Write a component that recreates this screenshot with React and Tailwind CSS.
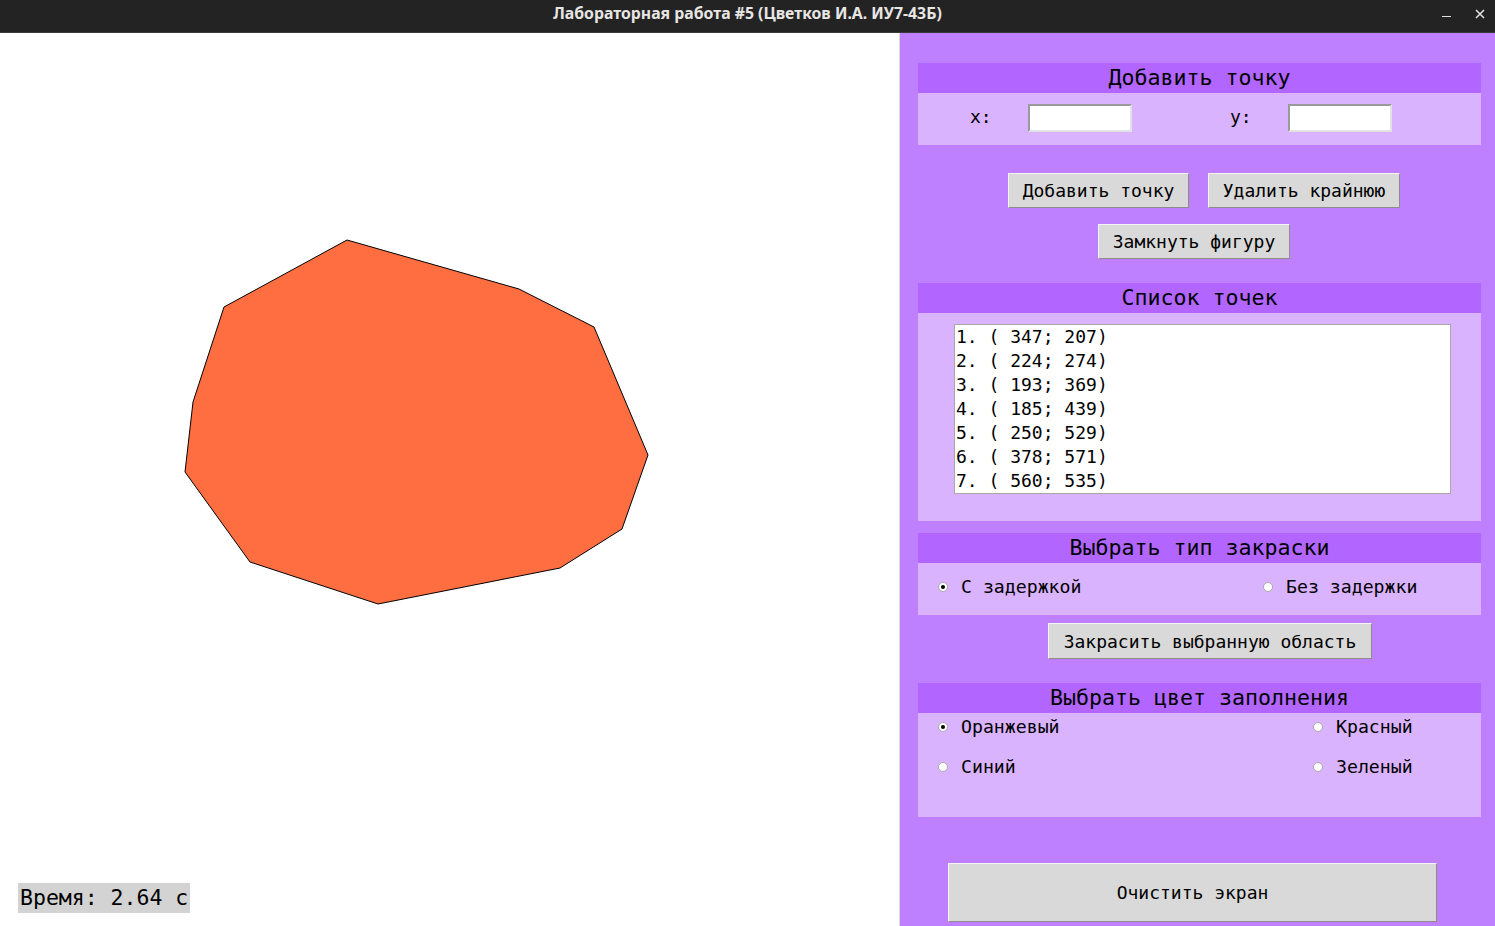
import React from "react";

const listed = [
    [347, 207],
    [224, 274],
    [193, 369],
    [185, 439],
    [250, 529],
    [378, 571],
    [560, 535],
];

// the rest of the figure is scrolled out of the listbox
const figure = [...listed, [622, 496], [648, 422], [594, 294], [519, 256]];

const mono = "font-['DejaVu_Sans_Mono',monospace]";

function TkButton({ children, className = "" }) {
    return (
        <div
            className={`flex items-center justify-center bg-[#d9d9d9] border border-t-[#f4f4f4] border-l-[#f4f4f4] border-r-[#8c8c8c] border-b-[#8c8c8c] text-[18px] text-black ${mono} ${className}`}
        >
            {children}
        </div>
    );
}

function Section({ title, children }) {
    return (
        <div>
            <div className={`h-[30px] bg-[#b366ff] flex items-center justify-center text-[21.6px] leading-none text-black ${mono}`}>
                {title}
            </div>
            <div className="bg-[#dab3ff]">{children}</div>
        </div>
    );
}

function Radio({ label, checked }) {
    return (
        <div className={`flex items-center h-[24px] text-[18.2px] text-black ${mono}`}>
            <span className="w-[10px] h-[10px] rounded-full bg-white border border-[#a9a9a9] flex items-center justify-center">
                {checked ? <span className="w-[4px] h-[4px] rounded-full bg-black" /> : null}
            </span>
            <span className="ml-[13px]">{label}</span>
        </div>
    );
}

function Entry() {
    return (
        <div className="w-[104px] h-[28px] bg-white border-2 border-t-[#9a9a9a] border-l-[#9a9a9a] border-r-[#e2e2e2] border-b-[#e2e2e2]" />
    );
}

export default function App() {
    return (
        <div className="w-[1495px] h-[926px] flex flex-col overflow-hidden">
            {/* Window title bar */}
            <div className="h-[33px] bg-[#232323] border-b border-[#3a3a3a] flex items-center relative pb-[4px]">
                <div className="flex-1 text-center text-[15.8px] font-bold text-[#e8e6e3] font-['Noto_Sans',sans-serif]">
                    Лабораторная работа #5 (Цветков И.А. ИУ7-43Б)
                </div>
                <div className="absolute right-[10px] top-0 h-[30px] flex items-center gap-[24px] text-[#e0e0e0]">
                    <span className="block w-[9px] h-[1.5px] bg-[#e0e0e0] mt-[3px]" />
                    <svg width="10" height="10" viewBox="0 0 10 10" className="mt-[-2px]">
                        <path d="M1 1L9 9M9 1L1 9" stroke="#e0e0e0" strokeWidth="1.6" />
                    </svg>
                </div>
            </div>

            <div className="flex flex-1">
                {/* Canvas */}
                <div className="w-[900px] bg-white border-r border-[#d9d9d9] flex flex-col">
                    <svg width="899" height="850" className="block">
                        <polygon
                            points={figure.map((p) => p.join(",")).join(" ")}
                            fill="#ff6e40"
                            stroke="#000"
                            strokeWidth="1"
                        />
                    </svg>
                    <div className={`ml-[18px] w-[172px] h-[30px] bg-[#d3d3d3] flex items-center pl-[2px] text-[21.5px] text-black whitespace-pre ${mono}`}>
                        Время: 2.64 с
                    </div>
                </div>

                {/* Control panel */}
                <div className="flex-1 bg-[#bf80ff] pl-[18px] pr-[14px] pt-[30px] flex flex-col">
                    <Section title="Добавить точку">
                        <div className={`h-[52px] pt-[11px] flex items-start text-[18px] leading-[28px] text-black ${mono}`}>
                            <div className="w-[110px] pl-[52px] leading-[26px]">x:</div>
                            <Entry />
                            <div className="w-[156px] pl-[98px] leading-[26px]">y:</div>
                            <Entry />
                        </div>
                    </Section>

                    <div className="mt-[28px] flex gap-[19px] pl-[90px]">
                        <TkButton className="w-[181px] h-[35px]">Добавить точку</TkButton>
                        <TkButton className="w-[192px] h-[35px]">Удалить крайнюю</TkButton>
                    </div>
                    <div className="mt-[16px] flex pl-[180px]">
                        <TkButton className="w-[192px] h-[35px]">Замкнуть фигуру</TkButton>
                    </div>

                    <div className="mt-[24px]">
                        <Section title="Список точек">
                            <div className="pt-[11px] pb-[27px] pl-[36px]">
                                <div className={`w-[497px] h-[170px] bg-white border border-[#a8a8a8] pl-[1px] text-[18px] leading-[24px] text-black whitespace-pre ${mono}`}>
                                    {listed.map(([x, y], i) => (
                                        <div key={i}>{`${i + 1}. ( ${x}; ${y})`}</div>
                                    ))}
                                </div>
                            </div>
                        </Section>
                    </div>

                    <div className="mt-[12px]">
                        <Section title="Выбрать тип закраски">
                            <div className="h-[52px] pb-[4px] flex items-center">
                                <div className="w-[345px] pl-[20px]">
                                    <Radio label="С задержкой" checked />
                                </div>
                                <Radio label="Без задержки" />
                            </div>
                        </Section>
                    </div>

                    <div className="mt-[8px] flex pl-[130px]">
                        <TkButton className="w-[324px] h-[36px]">Закрасить выбранную область</TkButton>
                    </div>

                    <div className="mt-[24px]">
                        <Section title="Выбрать цвет заполнения">
                            <div className="h-[104px] pt-[2px] grid grid-cols-[395px_1fr] gap-y-[16px] content-start">
                                <div className="pl-[20px]">
                                    <Radio label="Оранжевый" checked />
                                </div>
                                <Radio label="Красный" />
                                <div className="pl-[20px]">
                                    <Radio label="Синий" />
                                </div>
                                <Radio label="Зеленый" />
                            </div>
                        </Section>
                    </div>

                    <div className="mt-[46px] flex pl-[30px]">
                        <TkButton className="w-[489px] h-[59px]">Очистить экран</TkButton>
                    </div>
                </div>
            </div>
        </div>
    );
}
